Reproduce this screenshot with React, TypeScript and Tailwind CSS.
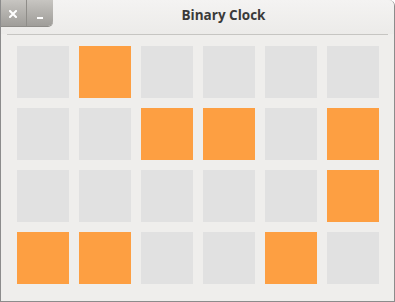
import React from 'react';

const bits = [
  [0, 1, 0, 0, 0, 0],
  [0, 0, 1, 1, 0, 1],
  [0, 0, 0, 0, 0, 1],
  [1, 1, 0, 0, 1, 0],
];

const App: React.FC = () => {
  return (
    <div className="w-[395px] h-[302px] bg-[#efeeec] border-x border-b border-[#8c8c8c] rounded-tr-[6px] overflow-hidden flex flex-col" style={{ fontFamily: '"Open Sans", "DejaVu Sans", sans-serif' }}>
      {/* Title bar */}
      <div className="relative h-[34px] bg-gradient-to-b from-[#f4f3f2] to-[#ecebe9]">
        <div className="absolute left-[-1px] top-0 flex h-[26px] w-[53px] rounded-br-[5px] overflow-hidden bg-gradient-to-b from-[#c7c5c1] to-[#9f9d99] shadow-[0_1px_0_#8e8c88]">
          <div className="w-[27px] flex items-center justify-center border-r border-[#8f8d89]">
            <svg width="8" height="8" viewBox="0 0 8 8" className="mt-[2px]">
              <path d="M1 1L7 7M7 1L1 7" stroke="#ffffff" strokeWidth="2" strokeLinecap="square" />
            </svg>
          </div>
          <div className="flex-1 pt-[17px] pl-[10px]">
            <div className="w-[6px] h-[2px] bg-white" />
          </div>
        </div>
        <div className="absolute left-[52px] right-0 top-[6px] text-center text-[13.5px] font-bold text-[#3a3a3a] leading-[18px]">Binary Clock</div>
      </div>
      <div className="h-px mx-[6px] bg-[#c6c5c2]" />

      {/* Grid */}
      <div className="pt-[11px] pl-[16px] grid grid-cols-[repeat(6,52px)] auto-rows-[52px] gap-[10px]">
        {bits.flat().map((b, i) => (
          <div key={i} className={b ? 'bg-[#fd9f42]' : 'bg-[#e1e1e1]'} />
        ))}
      </div>
    </div>
  );
};

export default App;
